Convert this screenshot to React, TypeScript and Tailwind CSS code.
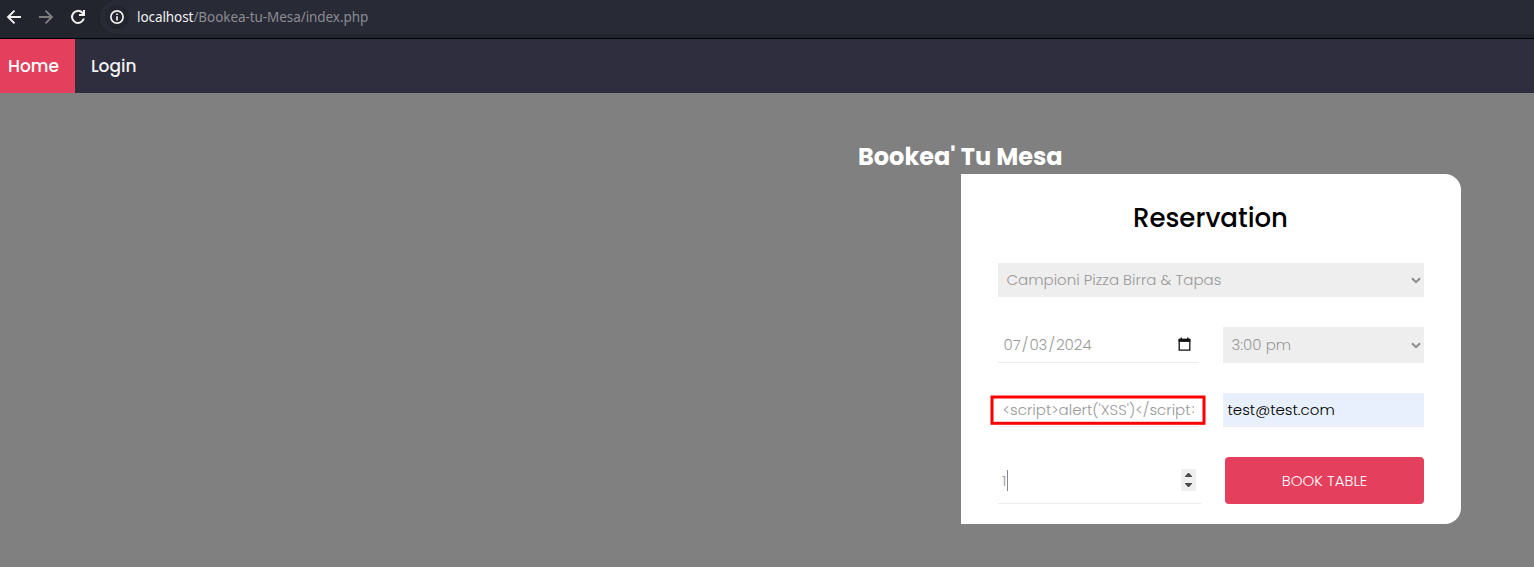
import type { ReactNode } from "react";

function BrowserBar() {
  return (
    <div className="flex h-[39px] border-b border-black bg-[#22242e] font-['Noto_Sans',sans-serif]">
      <div className="flex w-[100px] shrink-0 items-start gap-[16px] pl-[6px] pt-[9px]">
        <svg className="h-4 w-4" viewBox="0 0 16 16" fill="none" stroke="#f1f1f1" strokeWidth="2">
          <path d="M15 8H2.5M8.5 1.6 2.1 8l6.4 6.4" />
        </svg>
        <svg className="h-4 w-4" viewBox="0 0 16 16" fill="none" stroke="#7d7d80" strokeWidth="2">
          <path d="M1 8h12.5M7.5 1.6 13.9 8l-6.4 6.4" />
        </svg>
        <svg className="h-4 w-4" viewBox="0 0 16 16" fill="none" stroke="#f1f1f1" strokeWidth="2">
          <path d="M13.8 9.4A6 6 0 1 1 12.4 3.8L14 5.5" />
          <path d="M15 1v6H9V5h4V1z" fill="#f1f1f1" stroke="none" />
        </svg>
      </div>
      <div className="flex h-[34px] flex-1 items-center rounded-l-full bg-[#282a36] pl-[5px]">
        <span className="flex h-6 w-6 items-center justify-center rounded-full bg-[#22242e]">
          <svg className="h-[14px] w-[14px]" viewBox="0 0 14 14" fill="none" stroke="#f1f1f1">
            <circle cx="7" cy="7" r="6.1" strokeWidth="1.7" />
            <path d="M7 6.2v4.2M7 3.4v1.6" strokeWidth="1.7" />
          </svg>
        </span>
        <span className="ml-2 whitespace-nowrap text-[13.5px] leading-5 tracking-[-0.07px] text-[#8b8c92]">
          <span className="text-[#f1f1f1]">localhost</span>/Bookea-tu-Mesa/index.php
        </span>
      </div>
    </div>
  );
}

function NavBar() {
  return (
    <nav className="flex h-[54px] bg-[#2f2e3e] text-[17px] font-medium text-[#f2f2f2]">
      <a className="flex w-[75px] items-center bg-[#e43f5c] pl-2 pt-px text-white">Home</a>
      <a className="flex items-center pl-4 pt-px">Login</a>
    </nav>
  );
}

function Chevron() {
  return (
    <svg className="h-[7px] w-[10px]" viewBox="0 0 10 7" fill="none" stroke="#8c8c8c" strokeWidth="2">
      <path d="M1 1.2 5 5.2 9 1.2" />
    </svg>
  );
}

function SelectBox({ className, children }: { className: string; children: ReactNode }) {
  return (
    <div className={`flex items-center justify-between bg-[#eee] pl-[8.5px] pr-[3px] ${className}`}>
      {children}
      <Chevron />
    </div>
  );
}

function ReservationCard() {
  return (
    <section className="ml-[961px] h-[350px] w-[500px] rounded-r-2xl bg-white px-[37px] text-[15px] font-light text-[#999]">
      <h2 className="flex h-[89px] items-center justify-center pr-px text-[26px] font-medium text-black">
        Reservation
      </h2>
      <SelectBox className="h-[34px]">
        <span>Campioni Pizza Birra &amp; Tapas</span>
      </SelectBox>
      <div className="mt-[30px] flex justify-between">
        <div className="flex h-[36px] w-[201px] items-center justify-between border-b border-[#ebebeb] pl-[5.5px] pr-[8px]">
          <span className="pt-px">
            07<span className="px-px">/</span>03<span className="px-px">/</span>2024
          </span>
          <svg className="-mt-px h-[14px] w-[13px]" viewBox="0 0 13 14" fill="none" stroke="#111">
            <path d="M1.2 2.5h10.6v10.6H1.2z" strokeWidth="1.3" />
            <path d="M.7 3.4h11.6" strokeWidth="3" />
            <path d="M3.2 .6v2M9.8 .6v2" strokeWidth="1.4" />
          </svg>
        </div>
        <SelectBox className="h-[36px] w-[201px]">
          <span>3:00 pm</span>
        </SelectBox>
      </div>
      <div className="mt-[30px] flex justify-between">
        <div className="relative flex h-[34px] w-[201px] items-center border-b border-[#e8eef4] pl-1">
          <span className="w-[191.5px] overflow-hidden whitespace-nowrap pl-[0.5px] pt-px">
            &lt;script&gt;alert('XSS')&lt;/script&gt;
          </span>
          <svg className="absolute -left-[8px] top-[2px] h-[31px] w-[217px]" viewBox="0 0 217 31" fill="none">
            <rect x="2" y="2" width="212" height="26.3" stroke="#f00" strokeWidth="3" />
          </svg>
        </div>
        <div className="flex h-[34px] w-[201px] items-center border-b border-[#ebebeb] bg-[#e8f0fe] pl-[4.5px] pt-px text-black">
          <span>test@test.com</span>
        </div>
      </div>
      <div className="mt-[30px] flex justify-between">
        <div className="flex h-[47px] w-[203px] items-center border-b border-[#ebebeb] pl-1">
          <span className="pt-[2px]">1</span>
          <span className="ml-px h-[21px] w-px bg-[#888]" />
          <span className="ml-auto mr-[5px] flex h-[22px] w-[15px] flex-col items-center justify-between bg-[#efefef] py-1">
            <svg className="h-1 w-[7px]" viewBox="0 0 7 4" fill="#4a4a4a"><path d="M0 4V3.2L3 0h1l3 3.2V4z" /></svg>
            <svg className="h-1 w-[7px]" viewBox="0 0 7 4" fill="#4a4a4a"><path d="M0 0v.8L3 4h1L7 .8V0z" /></svg>
          </span>
        </div>
        <button className="h-[47px] w-[199px] rounded-[4px] bg-[#e43f5c] pt-[2px] text-[15px] text-white">
          BOOK TABLE
        </button>
      </div>
    </section>
  );
}

export default function App() {
  return (
    <div className="h-[567px] w-[1534px] overflow-hidden bg-[#808080] font-['Poppins','Inter',sans-serif]">
      <BrowserBar />
      <NavBar />
      <main className="pt-[46px]">
        <h1 className="ml-[858px] h-[35px] whitespace-nowrap text-[24px] font-bold leading-9 text-white">
          Bookea' Tu Mesa
        </h1>
        <ReservationCard />
      </main>
    </div>
  );
}
